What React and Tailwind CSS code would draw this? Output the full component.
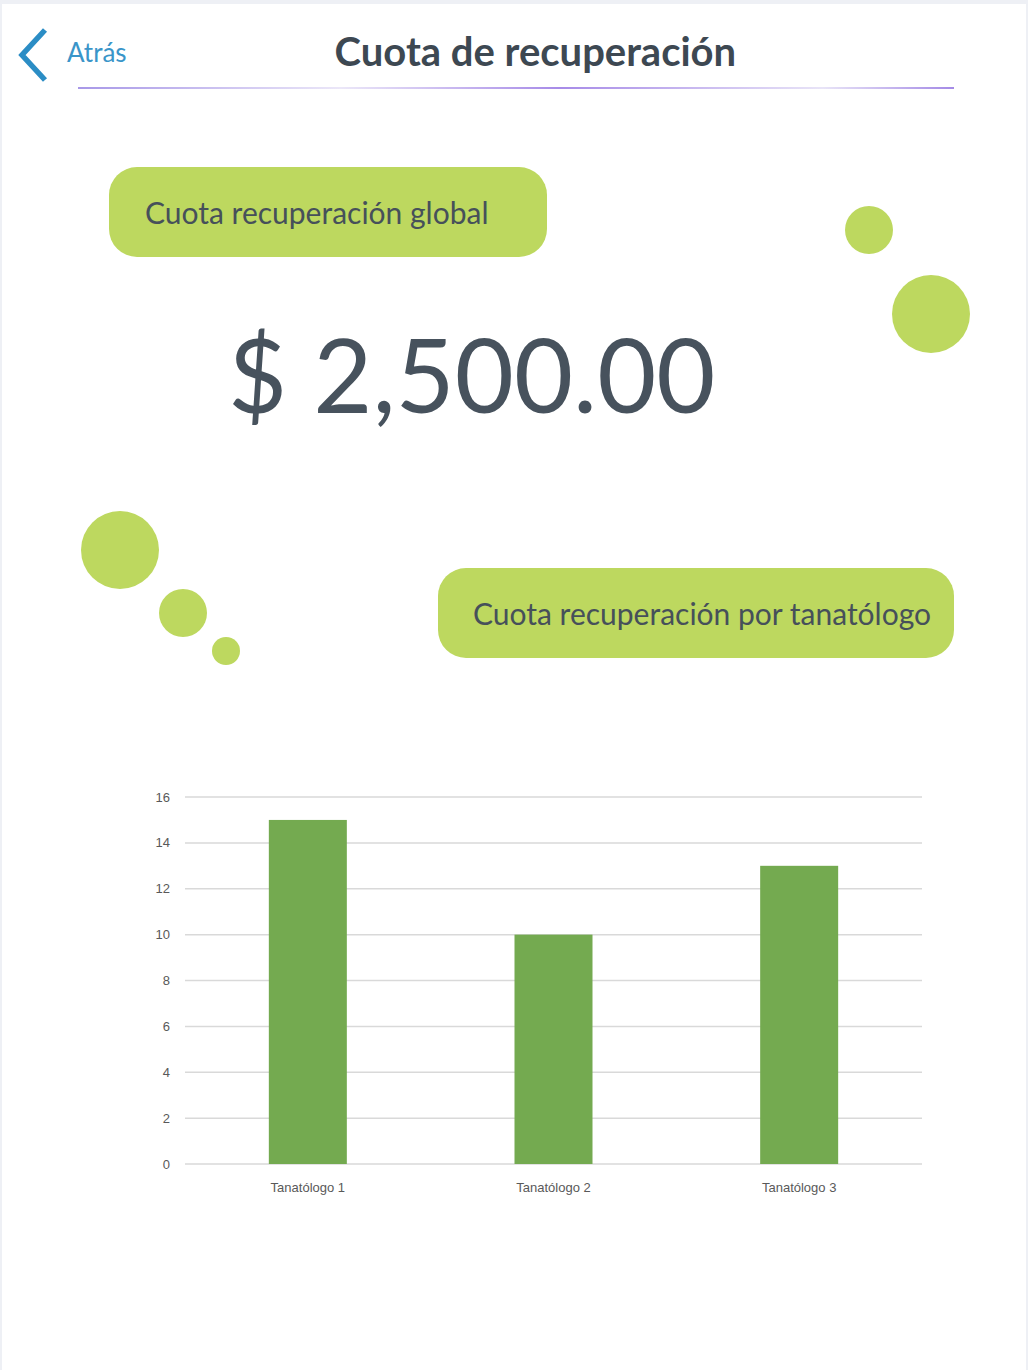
import React from "react";

const lato = { fontFamily: "Lato, 'Open Sans', sans-serif" };

const bars = [
  { label: "Tanatólogo 1", value: 15 },
  { label: "Tanatólogo 2", value: 10 },
  { label: "Tanatólogo 3", value: 13 },
];

function Chart() {
  const x0 = 45;
  const x1 = 782;
  const yTop = 17;
  const yBase = 384;
  const step = (yBase - yTop) / 16;
  const slot = (x1 - x0) / bars.length;
  const ticks = [0, 2, 4, 6, 8, 10, 12, 14, 16];

  return (
    <svg width="800" height="430" viewBox="0 0 800 430" className="block">
      {ticks.map((t) => {
        const y = yBase - t * step;
        return (
          <g key={t}>
            <line x1={x0} x2={x1} y1={y} y2={y} stroke="#d9d9d9" strokeWidth="1.5" />
            <text
              x="30"
              y={y + 4.5}
              textAnchor="end"
              fontSize="13"
              fill="#595959"
              fontFamily="'Liberation Sans', sans-serif"
            >
              {t}
            </text>
          </g>
        );
      })}
      {bars.map((b, i) => {
        const cx = x0 + slot * (i + 0.5);
        const h = b.value * step;
        return (
          <g key={b.label}>
            <rect x={cx - 39} y={yBase - h} width="78" height={h} fill="#74aa50" />
            <text
              x={cx}
              y="412"
              textAnchor="middle"
              fontSize="13"
              fill="#595959"
              fontFamily="'Liberation Sans', sans-serif"
            >
              {b.label}
            </text>
          </g>
        );
      })}
    </svg>
  );
}

function Bubble({ className }) {
  return <div className={"shrink-0 rounded-full bg-[#bdd85f] " + className} />;
}

export default function App() {
  return (
    <div className="min-h-[1370px] bg-[#eef0f5] pt-1 px-[2px]" style={lato}>
      <div className="h-[1366px] bg-white overflow-hidden">
        {/* header */}
        <div className="flex items-start pt-[23px] pl-[16px]">
          <svg width="30" height="56" viewBox="0 0 30 56" className="shrink-0">
            <polyline
              points="27,3 4,28 27,53"
              fill="none"
              stroke="#2b8dc5"
              strokeWidth="5.5"
            />
          </svg>
          <span className="ml-[19px] mt-[12px] text-[26px] text-[#3a95c9] leading-none">Atrás</span>
          <h1 className="ml-[208px] mt-[4px] text-[40px] font-bold text-[#3d4852] leading-none">
            Cuota de recuperación
          </h1>
        </div>
        <div className="ml-[76px] mt-[4px] w-[876px] h-[2px] bg-[linear-gradient(to_right,#a898e8,#ebe7f8_30%,#a78be8_55%,#e8e4f7_85%,#a48ae6)]" />

        {/* global */}
        <div className="flex items-start h-[90px] mt-[78px]">
          <div className="ml-[107px] w-[438px] h-[90px] rounded-[28px] bg-[#bdd85f] flex items-center pl-[36px]">
            <span className="text-[30px] text-[#46505a] leading-none">Cuota recuperación global</span>
          </div>
          <div className="ml-[298px] mt-[39px] flex flex-col gap-[21px]">
            <Bubble className="w-12 h-12" />
            <Bubble className="ml-[47px] w-[78px] h-[78px]" />
          </div>
        </div>
        <div className="ml-[226px] mt-[66px] text-[102px] leading-none text-[#47525d]">$ 2,500.00</div>

        {/* por tanatólogo */}
        <div className="flex items-start mt-[86px]">
          <div className="ml-[79px] flex flex-col">
            <Bubble className="w-[78px] h-[78px]" />
            <Bubble className="ml-[78px] w-12 h-12" />
            <Bubble className="ml-[131px] w-7 h-7" />
          </div>
          <div className="ml-[198px] mt-[57px] w-[516px] h-[90px] rounded-[28px] bg-[#bdd85f] flex items-center pl-[35px]">
            <span className="text-[30px] text-[#46505a] leading-none">Cuota recuperación por tanatólogo</span>
          </div>
        </div>

        <div className="ml-[138px] mt-[115px]">
          <Chart />
        </div>
      </div>
    </div>
  );
}
